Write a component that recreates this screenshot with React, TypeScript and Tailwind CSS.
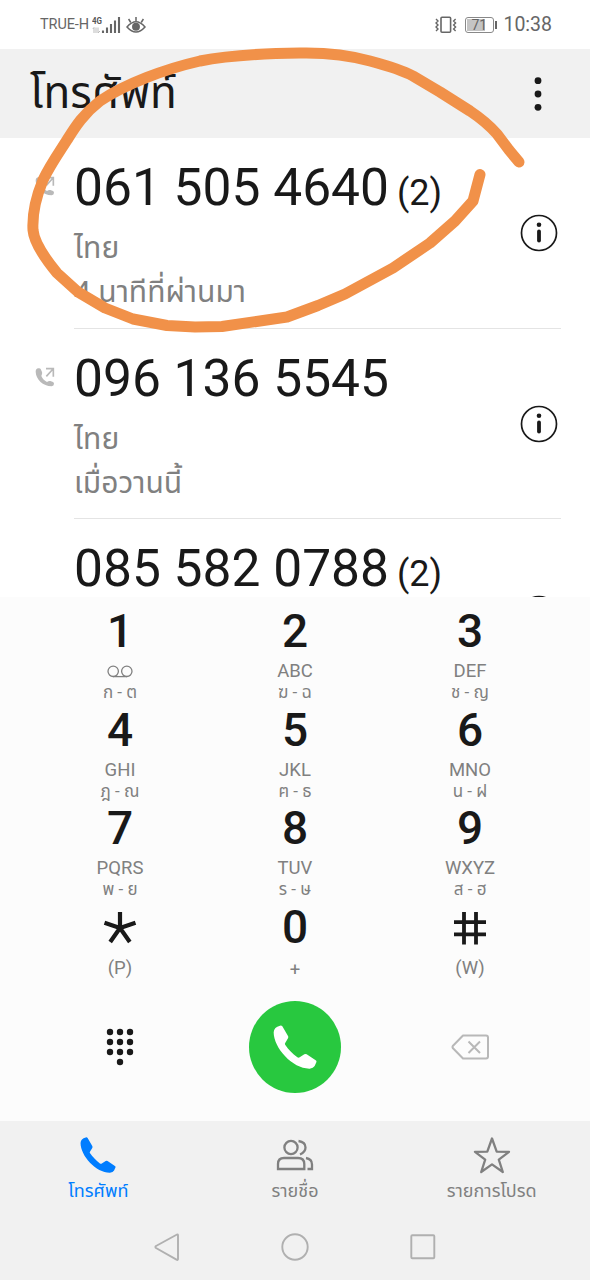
import React from "react";

const LATIN = "font-['Roboto','Noto_Sans_Thai','Noto_Sans',sans-serif]";

function Handset({ className }: { className: string }) {
  return (
    <svg viewBox="0 0 132 132" className={className} fill="currentColor">
      <path d="M21 2 Q3 6 2 22 C2 70 60 132 110 131 Q121 130 125 123 L130 112 Q132 108 128 106 L101 88 Q98 86 94 88 L80 97 Q77 99 73 97 C58 86 47 74 37 60 Q34 57 37 53 L45 40 Q47 36 45 33 L28 4 Q25 0 21 2Z" />
    </svg>
  );
}

function OutgoingIcon() {
  return (
    <svg viewBox="0 0 60 60" className="h-5 w-5 text-[#b9b9b9]">
      <path
        fill="currentColor"
        d="M10 4 Q2 5 2 14 C3 38 24 57 50 58 Q57 57 57 50 Q57 47 54 45 L46 42 Q43 41 40 43 L36 45 C28 41 22 35 19 27 L21 21 Q22 18 21 15 L17 6 Q15 3 10 4Z"
      />
      <path d="M33 5 H55 V29 M54 6 L34 28" fill="none" stroke="currentColor" strokeWidth="5" />
    </svg>
  );
}

function InfoIcon() {
  return (
    <svg viewBox="0 0 38 38" className="h-[38px] w-[38px] text-[#191919]">
      <circle cx="19" cy="19" r="17.5" fill="none" stroke="currentColor" strokeWidth="1.7" />
      <circle cx="19" cy="10.7" r="2.3" fill="currentColor" />
      <path d="M19 17.5 V26.5" stroke="currentColor" strokeWidth="3.8" strokeLinecap="round" />
    </svg>
  );
}

type Call = { number: string; count?: string; place?: string; when?: string; outgoing?: boolean };

const calls: Call[] = [
  { number: "061 505 4640", count: "(2)", place: "ไทย", when: "4 นาทีที่ผ่านมา", outgoing: true },
  { number: "096 136 5545", place: "ไทย", when: "เมื่อวานนี้", outgoing: true },
  { number: "085 582 0788", count: "(2)" },
];

function CallRow({ call }: { call: Call }) {
  return (
    <div className="flex h-[190.5px] shrink-0 pr-[29px]">
      <div className="w-[74px] shrink-0 pt-[38px] pl-[35px]">{call.outgoing && <OutgoingIcon />}</div>
      <div className="flex grow border-b border-[#e4e4e4]">
        <div className="grow pt-5">
          <div className="flex h-[60px] items-baseline whitespace-nowrap text-[#191919]">
            <span className="text-[51.5px] leading-[60px]">{call.number}</span>
            <span className="ml-2 text-[36px] leading-[40px]">{call.count}</span>
          </div>
          <div className="h-11 text-[30px] leading-[60px] whitespace-nowrap text-[#808080]">{call.place}</div>
          <div className="h-11 text-[30px] leading-[60px] whitespace-nowrap text-[#808080]">{call.when}</div>
        </div>
        <div className="pt-[76px] pr-[3px]">
          <InfoIcon />
        </div>
      </div>
    </div>
  );
}

function Voicemail() {
  return (
    <svg viewBox="0 0 26 13" className="h-[13px] w-[26px]" fill="none" stroke="#808080" strokeWidth="1.3">
      <circle cx="6.2" cy="6.3" r="5.2" />
      <circle cx="19.8" cy="6.3" r="5.2" />
      <path d="M6 11.6 H20" />
    </svg>
  );
}

function StarKey() {
  return (
    <svg viewBox="0 0 34 34" className="h-[34px] w-[34px]" stroke="#191919" strokeWidth="4.2">
      <path d="M17 17 V1 M17 17 L1.5 11.8 M17 17 L32.5 11.8 M17 17 L7.2 31 M17 17 L26.8 31" />
    </svg>
  );
}

function PoundKey() {
  return (
    <svg viewBox="0 0 34 34" className="h-[34px] w-[34px]" stroke="#191919" strokeWidth="3.8">
      <path d="M11 1 V33.5 M23 1 V33.5 M1 11.2 H33 M1 23.4 H33" />
    </svg>
  );
}

type Key = { main: React.ReactNode; sub: React.ReactNode; thai?: string };

const keys: Key[] = [
  { main: "1", sub: <Voicemail />, thai: "ก - ต" },
  { main: "2", sub: "ABC", thai: "ฆ - ฉ" },
  { main: "3", sub: "DEF", thai: "ช - ญ" },
  { main: "4", sub: "GHI", thai: "ฎ - ณ" },
  { main: "5", sub: "JKL", thai: "ฅ - ธ" },
  { main: "6", sub: "MNO", thai: "น - ฝ" },
  { main: "7", sub: "PQRS", thai: "พ - ย" },
  { main: "8", sub: "TUV", thai: "ร - ษ" },
  { main: "9", sub: "WXYZ", thai: "ส - ฮ" },
  { main: <StarKey />, sub: "(P)" },
  { main: "0", sub: "+" },
  { main: <PoundKey />, sub: "(W)" },
];

function KeyCell({ k }: { k: Key }) {
  return (
    <div className="flex h-[98.5px] flex-col items-center">
      <div className="flex h-[54px] items-center text-[46px] leading-[54px] font-medium text-[#191919]">
        {typeof k.main === "string" ? k.main : <div className="pt-1">{k.main}</div>}
      </div>
      <div
        className={
          "flex h-[22px] items-center text-[18.5px] leading-[22px] text-[#808080] " + (k.thai ? "mt-0.5" : "mt-[5px]")
        }
      >
        {k.sub}
      </div>
      <div className="h-5 text-[17px] leading-5 text-[#808080]">{k.thai}</div>
    </div>
  );
}

function StatusBar() {
  return (
    <div className="flex h-[49px] shrink-0 items-center bg-white pr-[38px] pl-10 text-[#666]">
      <span className="text-[14.5px] tracking-[-0.1px]">TRUE-H</span>
      <svg viewBox="0 0 30 20" className="ml-[3px] h-5 w-[30px]">
        <text x="0" y="8.5" fontSize="9" fontWeight="700" fill="#555" textLength="10" lengthAdjust="spacingAndGlyphs">
          4G
        </text>
        <path d="M2 18 V12.5 L0.8 14 M4 12.5 V18 M6 12.5 V18 L8 16" stroke="#bbb" fill="none" strokeWidth="1" />
        <path d="M11 15.5 V18 M15 12.5 V18 M19 9 V18 M23 5.5 V18 M27 2 V18" stroke="#666" strokeWidth="2.1" />
      </svg>
      <svg viewBox="0 0 20 18" className="ml-1 h-[18px] w-5" fill="none" stroke="#666" strokeWidth="1.5">
        <path d="M1 11 Q10 0.5 19 11 Q10 21 1 11Z" />
        <circle cx="10" cy="10.8" r="3.2" fill="#666" />
        <path d="M10 5 V1 M4.8 6.5 L2.6 3 M15.2 6.5 L17.4 3" />
      </svg>
      <div className="grow" />
      <svg viewBox="0 0 22 18" className="h-[18px] w-[22px]" fill="none" stroke="#666">
        <rect x="6" y="1.2" width="9.6" height="15" rx="1" strokeWidth="1.6" />
        <path
          d="M1 3 L3 5 L1 7 L3 9 L1 11 L3 13 L1 15 M20.6 3 L18.6 5 L20.6 7 L18.6 9 L20.6 11 L18.6 13 L20.6 15"
          strokeWidth="1.4"
        />
      </svg>
      <div className="ml-2 flex h-4 w-[29px] items-center rounded-[3px] border border-[#888] p-px">
        <div className="flex h-full w-[18px] items-center bg-[#c4c4c4] pl-1 text-[14px] leading-none">71</div>
      </div>
      <div className="ml-px h-2 w-0.5 bg-[#666]" />
      <span className="ml-1.5 text-[19.5px] leading-none whitespace-nowrap">10:38</span>
    </div>
  );
}

function Tab({ icon, label, active }: { icon: React.ReactNode; label: string; active?: boolean }) {
  return (
    <div className={"flex flex-1 flex-col items-center pt-3.5 " + (active ? "text-[#007dff]" : "text-[#808080]")}>
      <div className="flex h-10 items-center">{icon}</div>
      <div className="text-[18px] leading-8 whitespace-nowrap">{label}</div>
    </div>
  );
}

export default function App() {
  return (
    <div className={"relative flex h-[1280px] w-[590px] flex-col overflow-hidden bg-white " + LATIN}>
      <StatusBar />
      <header className="flex h-[89px] shrink-0 items-center justify-between bg-[#f1f1f1] pr-[47px] pl-[30px]">
        <h1 className="text-[44px] leading-[89px] whitespace-nowrap text-[#191919]">โทรศัพท์</h1>
        <svg viewBox="0 0 10 36" className="h-9 w-2.5" fill="#191919">
          <circle cx="5" cy="4.7" r="3.4" />
          <circle cx="5" cy="18" r="3.4" />
          <circle cx="5" cy="31.3" r="3.4" />
        </svg>
      </header>
      <main className="flex h-[458.5px] shrink-0 flex-col overflow-hidden">
        {calls.map((c) => (
          <CallRow key={c.number} call={c} />
        ))}
      </main>
      <section className="h-[524.5px] shrink-0 bg-[#fcfcfc] pt-[7.5px]">
        <div className="grid grid-cols-3 px-[32.5px]">
          {keys.map((k, i) => (
            <KeyCell key={i} k={k} />
          ))}
        </div>
        <div className="grid grid-cols-3 items-center justify-items-center px-[32.5px] pt-[3px]">
          <svg viewBox="0 0 28 38" className="h-[38px] w-7" fill="#191919">
            {[4, 14, 24].map((y) => [4, 14, 24].map((x) => <circle key={x + "-" + y} cx={x} cy={y} r="3.2" />))}
            <circle cx="14" cy="34" r="3.2" />
          </svg>
          <div className="flex h-[92px] w-[92px] items-center justify-center rounded-full bg-[#28c83f] text-white">
            <Handset className="h-11 w-11" />
          </div>
          <svg viewBox="0 0 38 26" className="h-[26px] w-[38px]" fill="none" stroke="#b8b8b8" strokeWidth="2">
            <path d="M12 1.5 H35 Q37 1.5 37 3.5 V22.5 Q37 24.5 35 24.5 H12 L2 14.3 Q1 13 2 11.7Z" strokeLinejoin="round" />
            <path d="M17.5 7.5 L29 19 M29 7.5 L17.5 19" />
          </svg>
        </div>
      </section>
      <footer className="flex grow flex-col bg-[#f1f1f1]">
        <nav className="flex h-[92px]">
          <Tab active label="โทรศัพท์" icon={<Handset className="h-9 w-9" />} />
          <Tab
            label="รายชื่อ"
            icon={
              <svg viewBox="0 0 38 32" className="h-8 w-[38px]" fill="none" stroke="currentColor" strokeWidth="2.3">
                <circle cx="15" cy="8.5" r="6.6" />
                <path d="M2 30 V25 Q2 19 8 19 H22 Q28.3 19 28.3 25 V30Z" />
                <path d="M22.5 2 Q29.5 3 29.5 8.5 Q29.5 13 24 15.5 M30 19 Q36 20 36 25.5 V30 H31.5" />
              </svg>
            }
          />
          <Tab
            label="รายการโปรด"
            icon={
              <svg viewBox="0 0 38 38" className="h-[38px] w-[38px]" fill="none" stroke="currentColor" strokeWidth="2.3">
                <path
                  strokeLinejoin="round"
                  d="M19 2.5 L23.7 15.6 L36 15.8 L25.8 23.6 L29.8 36 L19 28.4 L8.2 36 L12.2 23.6 L2 15.8 L14.3 15.6Z"
                />
              </svg>
            }
          />
        </nav>
        <div className="flex items-center justify-center gap-[100px] pt-5">
          <svg viewBox="0 0 28 28" className="h-7 w-7" fill="none" stroke="#b0b0b0" strokeWidth="1.9">
            <path strokeLinejoin="round" d="M24 1.5 Q25 1 25 2.5 V26 Q25 27.5 23.5 26.7 L3 15 Q1.8 14 3 13Z" />
          </svg>
          <svg viewBox="0 0 28 28" className="h-7 w-7" fill="none" stroke="#b0b0b0" strokeWidth="1.9">
            <circle cx="14" cy="14" r="12.7" />
          </svg>
          <svg viewBox="0 0 28 28" className="h-7 w-7" fill="none" stroke="#b0b0b0" strokeWidth="1.9">
            <rect x="2.3" y="2.3" width="23" height="23" rx="1" />
          </svg>
        </div>
      </footer>
      <svg
        viewBox="0 0 590 1280"
        className="pointer-events-none absolute inset-0 h-[1280px] w-[590px]"
        fill="none"
        stroke="#f19149"
        strokeWidth="11"
        strokeLinecap="round"
        strokeLinejoin="round"
      >
        <path d="M519 162 L509 150 L497 134 C490 126 482 119 470 111 L440 92 L413 76 C402 70 385 65 370 61 C345 54 325 52.5 300 53 C260 53.5 225 56 200 61 C165 69 125 84 100 101 C82 115 74 129 67 140 C56 157 49 167 43 180 C36 197 32 212 33 230 C34 242 43 256 57 273 L78 292 L105 308 L133 319 L167 325.5 L195 327 L222 326.5 L287 317 L318 305.5 L345 294 L393 268 L430 243 L455 221 L473 201 L480 174.5" />
      </svg>
    </div>
  );
}
